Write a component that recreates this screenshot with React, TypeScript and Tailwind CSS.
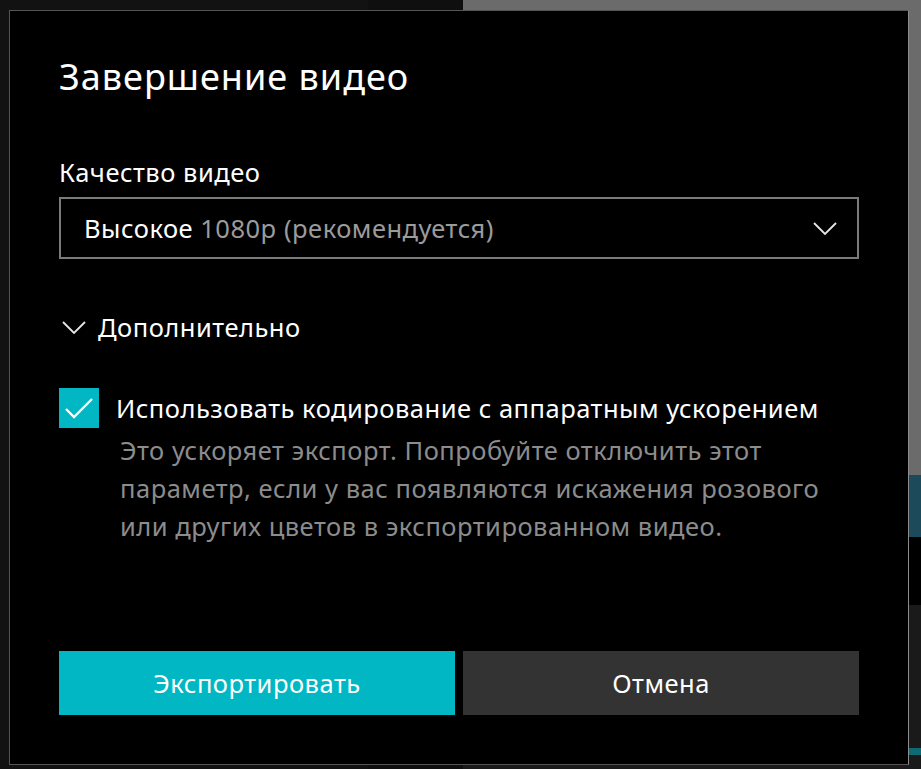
import React from "react";

function Chevron({ className }: { className?: string }) {
  return (
    <svg className={className} width="24" height="13" viewBox="0 0 24 13" fill="none">
      <polyline points="1,1 12,12 23,1" stroke="#e6e6e6" strokeWidth="1.8" />
    </svg>
  );
}

export default function App() {
  const font = { fontFamily: '"Noto Sans", "Open Sans", sans-serif' };
  return (
    <div className="relative h-[769px] w-[921px] overflow-hidden bg-[#121212]" style={font}>
      {/* app behind the dialog */}
      <div className="absolute left-[368px] top-0 h-[769px] w-[95px] bg-[#0f0f0f]" />
      <div className="absolute left-[463px] top-0 h-[475px] w-[458px] bg-[#6b6b6b]" />
      <div className="absolute left-[463px] top-[475px] h-[62px] w-[458px] bg-[#1d4a5a]" />
      <div className="absolute left-[463px] top-[537px] h-[68px] w-[458px] bg-black" />
      <div className="absolute left-[463px] top-[605px] h-[164px] w-[458px] bg-[#1a1a1a]" />
      <div className="absolute left-[900px] top-[748px] h-[7px] w-[21px] bg-[#0e6b74]" />

      <div className="absolute left-[9px] top-[10px] flex h-[755px] w-[900px] flex-col border border-[#555555] border-r-[#8c8c8c] bg-black pl-[49px] pr-[49px] pt-[46px] text-white">
        <h1 className="text-[36px] font-normal leading-[40px] tracking-[1px]">Завершение видео</h1>

        <div className="mt-[60px] text-[25.5px] leading-[30px] tracking-[0.5px]">Качество видео</div>
        <div className="mt-[10px] flex h-[62px] items-center justify-between border-2 border-[#7a7a7a] pl-[23px] pr-[20px] text-[25.5px] tracking-[0.5px]">
          <span>
            Высокое <span className="text-[#9b9b9b]">1080p (рекомендуется)</span>
          </span>
          <Chevron />
        </div>

        <div className="mt-[53px] flex items-center gap-[12px] pl-[3px] text-[25.5px] leading-[30px] tracking-[0.5px]">
          <Chevron />
          <span>Дополнительно</span>
        </div>

        <div className="mt-[46px] flex items-start gap-[17px]">
          <div className="flex h-[40px] w-[40px] shrink-0 items-center justify-center bg-[#00b7c3]">
            <svg width="40" height="40" viewBox="0 0 40 40" fill="none">
              <polyline points="7,21 15,29 33,11" stroke="white" strokeWidth="2.4" />
            </svg>
          </div>
          <div className="flex flex-col">
            <div className="text-[25.5px] leading-[40px] tracking-[0.5px]">Использовать кодирование с аппаратным ускорением</div>
            <p className="mt-[3px] pl-[4px] text-[25.5px] leading-[38px] tracking-[0.5px] text-[#8c8c8c]">
              Это ускоряет экспорт. Попробуйте отключить этот
              <br />
              параметр, если у вас появляются искажения розового
              <br />
              или других цветов в экспортированном видео.
            </p>
          </div>
        </div>

        <div className="mt-auto mb-[49px] grid grid-cols-2 gap-[8px]">
          <button className="h-[64px] bg-[#00b7c3] text-[25.5px] tracking-[0.5px] text-white">Экспортировать</button>
          <button className="h-[64px] bg-[#333333] text-[25.5px] tracking-[0.5px] text-white">Отмена</button>
        </div>
      </div>
    </div>
  );
}
